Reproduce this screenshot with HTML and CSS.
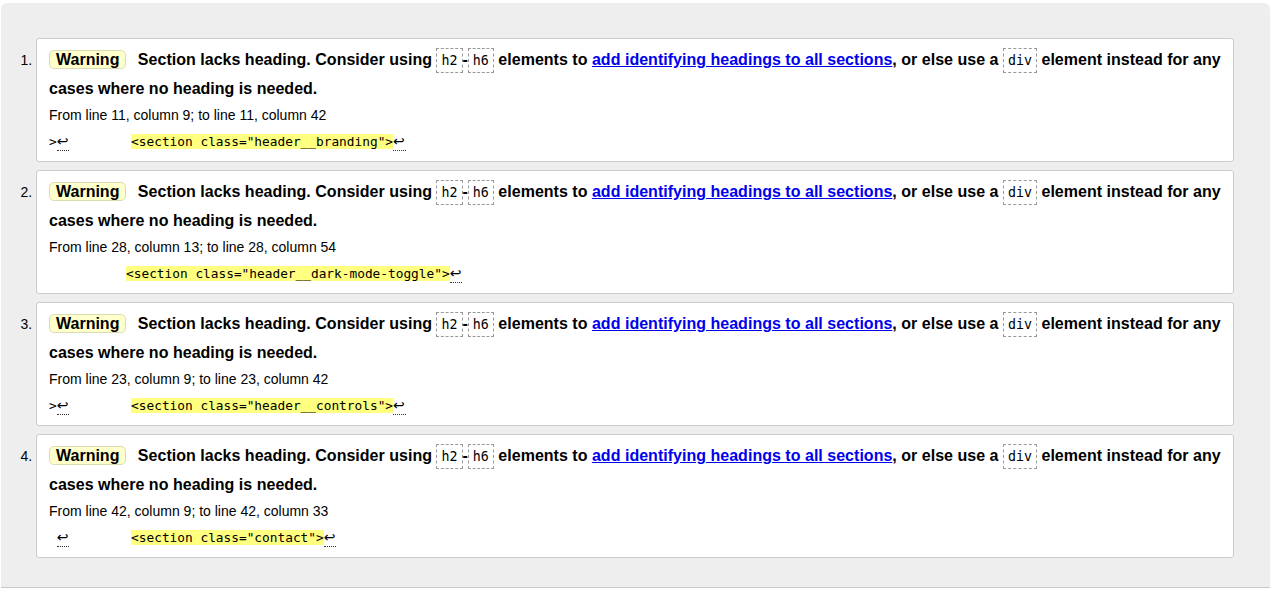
FILE: index.html
```html
<!DOCTYPE html>
<html lang="en">
<head>
<meta charset="utf-8">
<title>Validation results</title>
<link rel="stylesheet" href="styles.css">
</head>
<body>
<div class="results">
  <ol class="messages">
    <li class="warning">
      <p class="message"><strong class="badge">Warning</strong> Section lacks heading. Consider using <code>h2</code>-<code>h6</code> elements to <a href="#">add identifying headings to all sections</a>, or else use a <code>div</code> element instead for any cases where no heading is needed.</p>
      <p class="location">From line 11, column 9; to line 11, column 42</p>
      <p class="extract">&gt;<span class="lf">↩</span>        <mark>&lt;section class="header__branding"&gt;</mark><span class="lf">↩</span></p>
    </li>
    <li class="warning">
      <p class="message"><strong class="badge">Warning</strong> Section lacks heading. Consider using <code>h2</code>-<code>h6</code> elements to <a href="#">add identifying headings to all sections</a>, or else use a <code>div</code> element instead for any cases where no heading is needed.</p>
      <p class="location">From line 28, column 13; to line 28, column 54</p>
      <p class="extract">          <mark>&lt;section class="header__dark-mode-toggle"&gt;</mark><span class="lf">↩</span></p>
    </li>
    <li class="warning">
      <p class="message"><strong class="badge">Warning</strong> Section lacks heading. Consider using <code>h2</code>-<code>h6</code> elements to <a href="#">add identifying headings to all sections</a>, or else use a <code>div</code> element instead for any cases where no heading is needed.</p>
      <p class="location">From line 23, column 9; to line 23, column 42</p>
      <p class="extract">&gt;<span class="lf">↩</span>        <mark>&lt;section class="header__controls"&gt;</mark><span class="lf">↩</span></p>
    </li>
    <li class="warning">
      <p class="message"><strong class="badge">Warning</strong> Section lacks heading. Consider using <code>h2</code>-<code>h6</code> elements to <a href="#">add identifying headings to all sections</a>, or else use a <code>div</code> element instead for any cases where no heading is needed.</p>
      <p class="location">From line 42, column 9; to line 42, column 33</p>
      <p class="extract"> <span class="lf">↩</span>        <mark>&lt;section class="contact"&gt;</mark><span class="lf">↩</span></p>
    </li>
  </ol>
</div>
</body>
</html>
```

FILE: styles.css
```css
html, body {
  margin: 0;
  padding: 0;
  background: #fff;
}

body {
  font-family: "Liberation Sans", Arial, sans-serif;
  color: #000;
}

.results {
  margin: 3px 2px 0 1px;
  padding: 35px 36px 29px 35px;
  background: #eeeeee;
  border-radius: 6px 6px 0 0;
  border-bottom: 1px solid #c8c8c8;
}

.messages {
  margin: 0;
  padding: 0;
  list-style: decimal outside;
}

.messages li {
  font-size: 14px;
  background: #fff;
  border: 1px solid #cccccc;
  border-radius: 3px;
  padding: 7px 4px 9px 12px;
  margin-bottom: 8px;
}

.messages li:last-child {
  margin-bottom: 0;
}

.message {
  margin: 0;
  font-size: 16px;
  font-weight: bold;
  line-height: 28px;
  letter-spacing: 0.02px;
}

.badge {
  background: #ffffcc;
  border: 1px solid #dcdcb4;
  border-radius: 5px;
  padding: 0 6px;
  margin-right: 7px;
  letter-spacing: 0;
}

.message code {
  font-family: "DejaVu Sans Mono", "Liberation Mono", monospace;
  font-size: 13.3px;
  font-weight: normal;
  letter-spacing: 0;
  border: 1px dashed #999;
  padding: 4px;
}

.message a {
  color: #0000ee;
  text-decoration: underline;
}

.location {
  margin: 2px 0 0;
  font-size: 14px;
  line-height: 20px;
}

.extract {
  margin: 7px 0 0;
  font-family: "DejaVu Sans Mono", "Liberation Mono", monospace;
  font-size: 12.8px;
  line-height: 20px;
  white-space: pre;
}

.extract mark {
  background: #ffff80;
  color: #000;
}

.lf {
  font-family: "DejaVu Sans", sans-serif;
  font-size: 14px;
  line-height: 10px;
  border-bottom: 1px dotted #333;
  padding: 0 1px 1px 0;
}
```
